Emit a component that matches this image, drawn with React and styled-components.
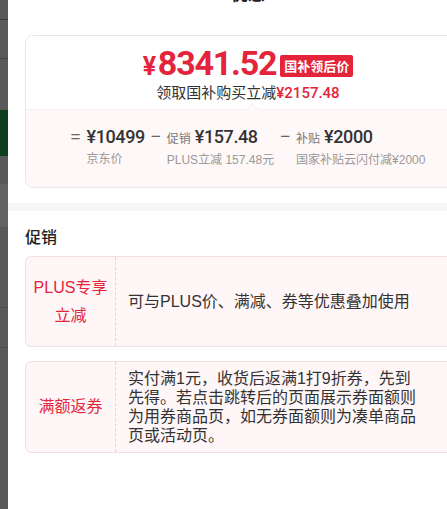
import React from "react";
import styled, { createGlobalStyle } from "styled-components";

const RED = "#e4243a";

const Global = createGlobalStyle`
  html, body { margin: 0; padding: 0; background: #fff; }
  body { font-family: "Liberation Sans", "Noto Sans CJK SC", sans-serif; }
  #root { width: 447px; height: 509px; overflow: hidden; }
`;

const Page = styled.div`
  display: flex;
  width: 447px;
  height: 509px;
  overflow: hidden;
`;

const Backdrop = styled.div`
  flex: 0 0 8px;
  display: flex;
  flex-direction: column;
  background: #595959;
`;

const Strip = styled.div`
  height: ${(p) => p.h}px;
  background: ${(p) => p.bg || "#595959"};
  border-bottom: ${(p) => (p.line ? `1px solid ${p.line}` : "none")};
`;

const Modal = styled.div`
  flex: 0 0 480px;
  background: #fff;
  display: flex;
  flex-direction: column;
`;

const Title = styled.div`
  margin-top: -14px;
  height: 18px;
  line-height: 18px;
  text-align: center;
  font-size: 17px;
  font-weight: 700;
  color: #222;
`;

const Section = styled.div`
  padding: 0 17px;
`;

const Card = styled.div`
  margin-top: 31px;
  border: 1px solid #f1e4e6;
  border-radius: 8px;
  overflow: hidden;
`;

const CardTop = styled.div`
  padding: 11px 0 7px;
  display: flex;
  flex-direction: column;
  align-items: center;
  background: #fff;
`;

const PriceLine = styled.div`
  display: flex;
  align-items: center;
  gap: 4px;
  height: 36px;
`;

const BigPrice = styled.span`
  font-family: Roboto, "Liberation Sans", sans-serif;
  font-weight: 700;
  font-size: 34px;
  letter-spacing: -1.2px;
  color: ${RED};
  line-height: 36px;
`;

const Yen = styled.span`
  font-size: 25px;
  margin-right: 3px;
`;

const Badge = styled.span`
  background: ${RED};
  color: #fff;
  font-family: "Noto Sans CJK SC", sans-serif;
  font-size: 13px;
  font-weight: 700;
  line-height: 22px;
  height: 22px;
  padding: 0 4px;
  border-radius: 2px;
  margin-top: 2px;
`;

const SaveLine = styled.div`
  font-family: "Noto Sans CJK SC", sans-serif;
  font-size: 15px;
  line-height: 18px;
  color: #333;
`;

const RedNum = styled.span`
  color: ${RED};
  font-family: Roboto, "Noto Sans CJK SC", sans-serif;
  font-weight: 500;
`;

const CardBottom = styled.div`
  position: relative;
  background: #fff8f8;
  border-top: 1px solid #fbeeee;
  padding: 15px 0 18px;
  display: flex;
  justify-content: center;
  gap: 6px;
`;

const Notch = styled.span`
  position: absolute;
  top: -5px;
  left: 222px;
  width: 8px;
  height: 8px;
  background: #fff8f8;
  border-left: 1px solid #fbeeee;
  border-top: 1px solid #fbeeee;
  transform: rotate(45deg);
`;

const Group = styled.div`
  display: flex;
  align-items: flex-start;
`;

const Op = styled.span`
  font-family: "Liberation Sans", sans-serif;
  font-size: 17px;
  color: #666;
  line-height: 24px;
  margin-right: 6px;
`;

const GroupBody = styled.div`
  display: flex;
  flex-direction: column;
`;

const MainLine = styled.div`
  display: flex;
  align-items: baseline;
  gap: 4px;
  line-height: 24px;
  white-space: nowrap;
`;

const Tag = styled.span`
  font-family: "Noto Sans CJK SC", sans-serif;
  font-size: 12px;
  color: #777;
`;

const Amount = styled.span`
  font-family: Roboto, "Liberation Sans", sans-serif;
  font-weight: 500;
  font-size: 18px;
  letter-spacing: -0.4px;
  color: #333;
`;

const SubLabel = styled.div`
  margin-top: 1px;
  font-size: 12px;
  line-height: 18px;
  color: #999;
  white-space: nowrap;
`;

const Band = styled.div`
  margin-top: 15px;
  height: 8px;
  background: #f6f7f9;
`;

const Heading = styled.div`
  margin-top: 14px;
  font-family: "Noto Sans CJK SC", sans-serif;
  font-size: 16px;
  font-weight: 500;
  line-height: 22px;
  color: #222;
`;

const PromoList = styled.div`
  margin-top: 9px;
  display: flex;
  flex-direction: column;
  gap: 14px;
`;

const PromoRow = styled.div`
  display: flex;
  min-height: 89px;
  background: #fff6f7;
  border: 1px solid #f4dfe2;
  border-radius: 6px;
`;

const PromoLabel = styled.div`
  flex: 0 0 89px;
  display: flex;
  align-items: center;
  justify-content: center;
  text-align: center;
  border-right: 1px dashed #ecd0d4;
  color: ${RED};
  font-size: 16px;
  line-height: 28px;
`;

const PromoText = styled.div`
  flex: 1;
  display: flex;
  flex-direction: column;
  justify-content: center;
  padding: 7px 12px;
  font-size: 16px;
  line-height: 19px;
  color: #333;
`;

const Line = styled.span`
  display: block;
  white-space: nowrap;
`;

const parts = [
  { op: "=", tag: null, amount: "¥10499", sub: "京东价" },
  { op: "−", tag: "促销", amount: "¥157.48", sub: "PLUS立减 157.48元" },
  { op: "−", tag: "补贴", amount: "¥2000", sub: "国家补贴云闪付减¥2000" },
];

export default function App() {
  return (
    <>
      <Global />
      <Page>
        <Backdrop>
          <Strip h={19} line="#4a3434" />
          <Strip h={38} line="#444" />
          <Strip h={52} />
          <Strip h={46} bg="#0d3f1f" />
          <Strip h={28} />
          <Strip h={44} bg="#626262" />
          <Strip h={80} line="#4e4e4e" />
          <Strip h={40} line="#4e4e4e" />
          <Strip h={60} />
          <Strip h={102} />
        </Backdrop>
        <Modal>
          <Title>优惠</Title>
          <Section>
            <Card>
              <CardTop>
                <PriceLine>
                  <BigPrice>
                    <Yen>¥</Yen>8341.52
                  </BigPrice>
                  <Badge>国补领后价</Badge>
                </PriceLine>
                <SaveLine>
                  领取国补购买立减<RedNum>¥2157.48</RedNum>
                </SaveLine>
              </CardTop>
              <CardBottom>
                <Notch />
                {parts.map((p) => (
                  <Group key={p.sub}>
                    <Op>{p.op}</Op>
                    <GroupBody>
                      <MainLine>
                        {p.tag && <Tag>{p.tag}</Tag>}
                        <Amount>{p.amount}</Amount>
                      </MainLine>
                      <SubLabel>{p.sub}</SubLabel>
                    </GroupBody>
                  </Group>
                ))}
              </CardBottom>
            </Card>
          </Section>
          <Band />
          <Section>
            <Heading>促销</Heading>
            <PromoList>
              <PromoRow>
                <PromoLabel>
                  PLUS专享
                  <br />
                  立减
                </PromoLabel>
                <PromoText>
                  <Line>可与PLUS价、满减、券等优惠叠加使用</Line>
                </PromoText>
              </PromoRow>
              <PromoRow>
                <PromoLabel>满额返券</PromoLabel>
                <PromoText>
                  <Line>实付满1元，收货后返满1打9折券，先到</Line>
                  <Line>先得。若点击跳转后的页面展示券面额则</Line>
                  <Line>为用券商品页，如无券面额则为凑单商品</Line>
                  <Line>页或活动页。</Line>
                </PromoText>
              </PromoRow>
            </PromoList>
          </Section>
        </Modal>
      </Page>
    </>
  );
}
